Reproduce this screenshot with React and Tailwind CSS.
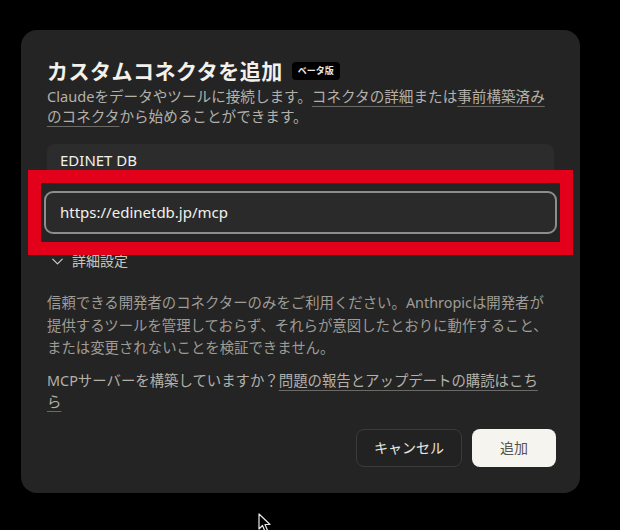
import React from "react";
import { ChevronDown } from "lucide-react";

const FONT = {
  fontFamily: '"Noto Sans", "Noto Sans CJK JP", sans-serif',
};

function LinkText({ children }) {
  return (
    <span className="underline decoration-[#6b6a66] decoration-1 underline-offset-[4px]">
      {children}
    </span>
  );
}

function Cursor() {
  return (
    <svg
      className="absolute left-[258px] top-[513px]"
      width="14"
      height="20"
      viewBox="0 0 14 20"
    >
      <path
        d="M1 1 L1 16 L4.5 12.5 L7 18.5 L9.5 17.5 L7 11.5 L12 11.5 Z"
        fill="#000"
        stroke="#e8e8e8"
        strokeWidth="1.2"
        strokeLinejoin="round"
      />
    </svg>
  );
}

export default function App() {
  return (
    <div
      className="relative h-[530px] w-[620px] overflow-hidden bg-black pl-[21px] pt-[30px]"
      style={FONT}
    >
      <div className="relative flex h-[463px] w-[559px] flex-col rounded-[16px] bg-[#242424] px-[26px] pt-[27px]">
        <div className="flex items-center gap-[9px]">
          <h2 className="text-[21px] font-semibold leading-[28px] tracking-[0.5px] text-[#f2f1ec]">
            カスタムコネクタを追加
          </h2>
          <span className="rounded-[4px] bg-black px-[6px] py-[2px] text-[9px] font-semibold leading-[14px] text-[#e8e8e8]">
            ベータ版
          </span>
        </div>
        <p className="mt-[1px] text-[14.6px] leading-[20px] text-[#b3b1a9]">
          Claudeをデータやツールに接続します。
          <LinkText>コネクタの詳細</LinkText>または
          <LinkText>事前構築済み</LinkText>
          <br />
          <LinkText>のコネクタ</LinkText>から始めることができます。
        </p>

        <div className="mt-[18px] flex flex-col gap-[7px]">
          <div className="h-[40px] rounded-[8px] bg-[#2c2c2c] px-[13px] pt-[5px] text-[15px] leading-[22px] text-[#f2f1ec]">
            EDINET DB
          </div>
          <div className="mx-[-3px] flex h-[43px] items-center rounded-[9px] border-2 border-[#8d8d8f] bg-[#2a2a2a] px-[14px] text-[15px] text-[#f2f1ec]">
            https://edinetdb.jp/mcp
          </div>
        </div>

        <div className="mt-[17px] flex items-center gap-[5px] pl-[1px] text-[14px] leading-[20px] text-[#c9c7bf]">
          <ChevronDown size={19} strokeWidth={1.6} />
          <span>詳細設定</span>
        </div>

        <p className="mt-[21px] text-[14.4px] leading-[22.5px] text-[#9e9c95]">
          信頼できる開発者のコネクターのみをご利用ください。Anthropicは開発者が
          <br />
          提供するツールを管理しておらず、それらが意図したとおりに動作すること、
          <br />
          または変更されないことを検証できません。
        </p>

        <p className="mt-[10px] text-[14.4px] leading-[21px] text-[#b3b1a9]">
          MCPサーバーを構築していますか？
          <LinkText>問題の報告とアップデートの購読はこち</LinkText>
          <br />
          <LinkText>ら</LinkText>
        </p>

        <div className="mr-[-2px] mt-[17px] flex justify-end gap-[10px]">
          <button className="h-[38px] w-[106px] rounded-[8px] border border-[#3b3b3b] bg-[#222222] text-[14px] text-[#e9e8e2]">
            キャンセル
          </button>
          <button className="h-[38px] w-[84px] rounded-[8px] bg-[#f5f4ee] text-[14px] text-[#555450]">
            追加
          </button>
        </div>
      </div>

      <div className="pointer-events-none absolute left-[28px] top-[170px] h-[85px] w-[545px] border-[13px] border-[#e3001b]" />

      <Cursor />
    </div>
  );
}
